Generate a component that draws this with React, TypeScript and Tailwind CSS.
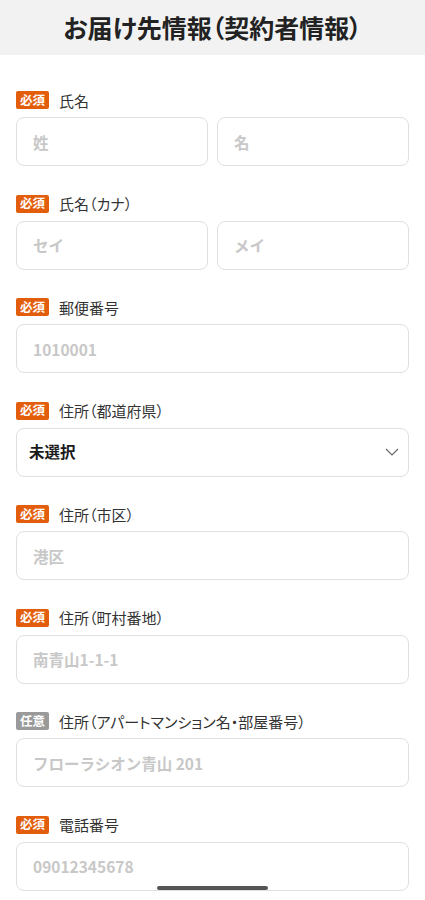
import React from "react";

const font = { fontFamily: '"Noto Sans CJK JP", "Noto Sans", sans-serif' };
const palt = { fontFeatureSettings: '"palt"' };

function Badge({ optional }: { optional?: boolean }) {
  return (
    <span
      className={`inline-flex items-center justify-center w-[33px] h-[18px] rounded-[2px] text-[12.5px] font-bold text-white leading-none ${
        optional ? "bg-[#9a9a9a]" : "bg-[#e35e0c]"
      }`}
    >
      {optional ? "任意" : "必須"}
    </span>
  );
}

function Label({ text, optional }: { text: string; optional?: boolean }) {
  return (
    <div className="flex items-center h-[20px] gap-[10px]">
      <Badge optional={optional} />
      <span className="text-[15px] text-[#333333] leading-none" style={palt}>
        {text}
      </span>
    </div>
  );
}

function Field({ placeholder }: { placeholder: string }) {
  return (
    <input
      readOnly
      placeholder={placeholder}
      className="w-full min-w-0 h-[49px] rounded-[8px] border border-[#e0e0e0] bg-white px-[16px] text-[15.5px] font-bold placeholder:text-[#c8c8c8] outline-none"
      style={font}
    />
  );
}

export default function App() {
  return (
    <div className="relative w-full h-[900px] overflow-hidden bg-white" style={font}>
      <div className="h-[55px] bg-[#f2f2f2] flex items-center justify-center">
        <h1 className="text-[25px] font-bold text-[#222222] leading-none" style={palt}>
          お届け先情報（契約者情報）
        </h1>
      </div>
      <div className="px-[16px] pt-[35px] flex flex-col gap-[27.5px]">
        <div className="flex flex-col gap-[7px]">
          <Label text="氏名" />
          <div className="grid grid-cols-2 gap-[9px]">
            <Field placeholder="姓" />
            <Field placeholder="名" />
          </div>
        </div>
        <div className="flex flex-col gap-[7px]">
          <Label text="氏名（カナ）" />
          <div className="grid grid-cols-2 gap-[9px]">
            <Field placeholder="セイ" />
            <Field placeholder="メイ" />
          </div>
        </div>
        <div className="flex flex-col gap-[7px]">
          <Label text="郵便番号" />
          <Field placeholder="1010001" />
        </div>
        <div className="flex flex-col gap-[7px]">
          <Label text="住所（都道府県）" />
          <div className="h-[49px] rounded-[8px] border border-[#e0e0e0] bg-white pl-[12px] pr-[9px] flex items-center justify-between">
            <span className="text-[15.5px] font-bold text-[#1a1a1a]">未選択</span>
            <svg width="14" height="8" viewBox="0 0 14 8" fill="none">
              <path d="M1 1l6 6 6-6" stroke="#666" strokeWidth="1.1" />
            </svg>
          </div>
        </div>
        <div className="flex flex-col gap-[7px]">
          <Label text="住所（市区）" />
          <Field placeholder="港区" />
        </div>
        <div className="flex flex-col gap-[7px]">
          <Label text="住所（町村番地）" />
          <Field placeholder="南青山1-1-1" />
        </div>
        <div className="flex flex-col gap-[7px]">
          <Label text="住所（アパートマンション名・部屋番号）" optional />
          <Field placeholder="フローラシオン青山 201" />
        </div>
        <div className="flex flex-col gap-[7px]">
          <Label text="電話番号" />
          <Field placeholder="09012345678" />
        </div>
      </div>
      <div className="absolute left-[157px] top-[886px] w-[111px] h-[4px] rounded-full bg-[#555555]" />
    </div>
  );
}
